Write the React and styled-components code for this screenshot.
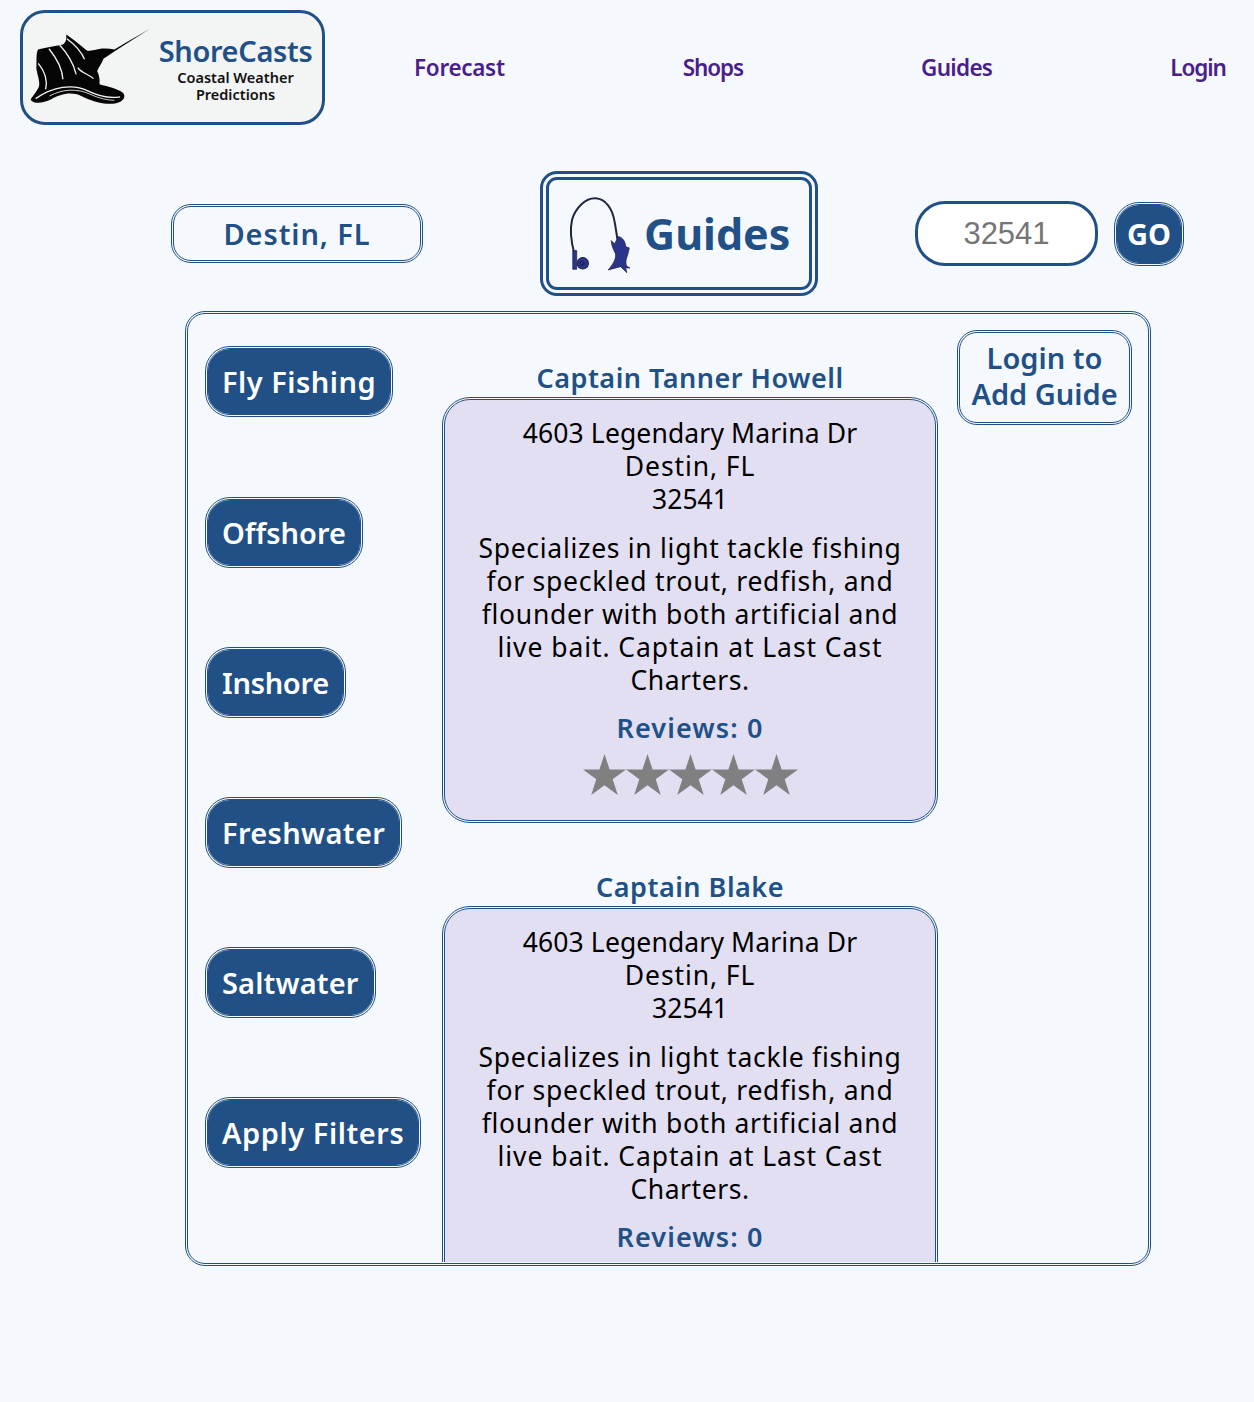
import React from "react";
import styled, { createGlobalStyle } from "styled-components";

const blue = "#215087";
const FONT = `"Noto Sans", "DejaVu Sans", sans-serif`;

const Global = createGlobalStyle`
  html, body { margin: 0; padding: 0; background: #f5f9fd; }
  body { font-family: ${FONT}; }
  * { box-sizing: border-box; }
`;

const Page = styled.div`
  width: 1254px;
  height: 1402px;
  overflow: hidden;
  background: #f5f9fd;
`;

const Header = styled.header`
  display: flex;
  align-items: center;
  padding: 10px 0 0 20px;
  height: 125px;
`;

const LogoBox = styled.div`
  flex: none;
  display: flex;
  width: 305px;
  height: 115px;
  padding: 13px 2px 0 5px;
  border: 3px solid ${blue};
  border-radius: 25px;
  background: #f3f4f4;
`;

const LogoText = styled.div`
  flex: 1;
  display: flex;
  flex-direction: column;
  align-items: center;
  padding-top: 8px;
`;

const Brand = styled.div`
  font-size: 29px;
  line-height: 34px;
  font-weight: 600;
  letter-spacing: -0.35px;
  color: ${blue};
`;

const Tagline = styled.div`
  margin-top: 1px;
  font-size: 14.5px;
  line-height: 17px;
  font-weight: 600;
  color: #111;
  text-align: center;
`;

const Nav = styled.nav`
  display: flex;
  gap: 178px;
  margin-left: 89px;
`;

const NavLink = styled.a`
  font-size: 22.5px;
  font-weight: 600;
  color: #4a1e8c;
  white-space: nowrap;
  letter-spacing: ${(p) => p.$ls}px;
`;

const Toolbar = styled.div`
  display: flex;
  align-items: center;
  height: 125px;
  margin-top: 46px;
  padding-left: 171px;
`;

const Location = styled.div`
  width: 252px;
  height: 59px;
  display: flex;
  align-items: center;
  justify-content: center;
  border: 3px double ${blue};
  border-radius: 20px;
  font-size: 29px;
  font-weight: 600;
  letter-spacing: 0.9px;
  color: ${blue};
`;

const TitleBox = styled.div`
  width: 278px;
  height: 125px;
  margin-left: 117px;
  display: flex;
  align-items: center;
  padding-left: 18px;
  gap: 10px;
  border: 9px double ${blue};
  border-radius: 17px;
`;

const TitleText = styled.h1`
  margin: 0;
  font-size: 43px;
  font-weight: 700;
  color: ${blue};
`;

const ZipInput = styled.input`
  width: 183px;
  height: 65px;
  margin-left: 97px;
  border: 3px solid ${blue};
  border-radius: 30px;
  background: #fff;
  text-align: center;
  font-family: "Liberation Sans", Arial, sans-serif;
  font-size: 31px;
  outline: none;
  &::placeholder { color: #757575; opacity: 1; }
`;

const GoButton = styled.button`
  width: 70px;
  height: 64px;
  margin-left: 16px;
  padding: 0;
  border: 3px double ${blue};
  border-radius: 25px;
  background: ${blue};
  background-clip: padding-box;
  color: #fff;
  font-family: ${FONT};
  font-size: 29px;
  font-weight: 700;
`;

const Panel = styled.main`
  display: flex;
  align-items: flex-start;
  width: 966px;
  height: 955px;
  margin: 15px 0 0 185px;
  padding: 5px 0 0 17px;
  border: 3px double ${blue};
  border-radius: 20px;
  overflow: hidden;
`;

const Filters = styled.aside`
  flex: none;
  width: 237px;
  display: flex;
  flex-direction: column;
  align-items: flex-start;
  gap: 79.2px;
  padding-top: 27.4px;
`;

const FilterButton = styled.button`
  height: 71px;
  padding: 0 14px;
  border: 3px double ${blue};
  border-radius: 25px;
  background: ${blue};
  background-clip: padding-box;
  color: #fff;
  font-family: ${FONT};
  font-size: 29px;
  font-weight: 600;
  white-space: nowrap;
  letter-spacing: ${(p) => p.$ls}px;
`;

const Guides = styled.section`
  flex: none;
  width: 496px;
  height: 943px;
  overflow: hidden;
  padding-top: 42px;
`;

const GuideEntry = styled.article`
  margin-bottom: 47px;
`;

const GuideName = styled.h2`
  margin: 0 0 3px;
  font-size: 27px;
  line-height: 33px;
  font-weight: 600;
  letter-spacing: 0.5px;
  text-align: center;
  color: ${blue};
`;

const GuideCard = styled.div`
  height: 426px;
  padding: 17px 0 0;
  border: 3px double ${blue};
  border-radius: 28px;
  background: #e2dff2;
  background-clip: padding-box;
  text-align: center;
`;

const TextBlock = styled.p`
  margin: 0 0 ${(p) => p.$gap}px;
  font-size: 26.5px;
  line-height: 33px;
  color: #000;
`;

const Line = styled.span`
  display: block;
  white-space: nowrap;
  letter-spacing: ${(p) => p.$ls}px;
`;

const Reviews = styled.div`
  font-size: 27px;
  line-height: 33px;
  font-weight: 600;
  letter-spacing: 1.1px;
  color: ${blue};
`;

const Stars = styled.div`
  display: flex;
  justify-content: center;
  margin-top: 10px;
`;

const AddGuide = styled.button`
  flex: none;
  width: 175px;
  height: 95px;
  margin: 11px 0 0 19px;
  padding: 0 0 3px;
  border: 3px double ${blue};
  border-radius: 20px;
  background: transparent;
  color: ${blue};
  font-family: ${FONT};
  font-size: 29px;
  line-height: 36px;
  font-weight: 600;
`;

const Sailfish = () => (
  <svg width="123" height="80" viewBox="55 80 370 240" style={{ flex: "none" }}>
    <path d="M422 88 L345 132 L315 150 C295 146 270 146 255 152 L235 155 C215 140 190 118 170 105 C172 120 168 130 160 135 C135 140 105 145 85 150 C78 165 82 185 80 205 C82 225 92 245 88 262 C80 280 65 295 63 302 C75 315 100 312 125 300 C150 285 185 275 215 290 C245 305 285 318 320 312 C340 308 350 295 342 282 C330 270 295 262 270 255 C272 240 268 225 263 215 C270 200 278 190 282 178 L318 154 L345 137 Z" fill="#050505" />
    <g fill="none" stroke="#f3f4f4" strokeWidth="4">
      <path d="M118 148 C140 175 158 205 160 240" />
      <path d="M150 137 C172 160 192 195 200 225" />
      <path d="M172 118 C195 135 215 155 225 180" />
      <path d="M86 192 C105 215 115 240 108 270" />
      <path d="M205 205 C215 222 240 225 252 238" />
      <path d="M78 298 C130 262 190 252 235 275 C265 290 300 298 332 293" />
      <path d="M120 290 C160 268 205 268 240 284 C270 298 295 303 315 303" strokeWidth="2.5" />
    </g>
  </svg>
);

const RodIcon = () => (
  <svg width="67" height="82" viewBox="110 80 200 245" style={{ flex: "none" }}>
    <path d="M132 262 C122 225 118 190 125 160 C135 125 165 95 195 96 C225 98 245 125 252 165 C256 185 258 205 262 225" fill="none" stroke="#24263f" strokeWidth="6" />
    <path d="M127 252 L139 252 L139 308 L127 308 Z" fill="#2a3488" stroke="#1c1d3f" strokeWidth="2" />
    <circle cx="157" cy="290" r="17" fill="#2a3488" stroke="#1c1d3f" strokeWidth="3" />
    <circle cx="155" cy="290" r="6" fill="none" stroke="#11142e" strokeWidth="2" />
    <path d="M264 210 C275 212 285 225 285 240 L296 244 L292 262 C288 275 283 285 288 298 L298 304 L285 304 L289 318 L270 300 L233 310 C245 295 257 280 255 262 C250 250 243 240 242 222 L252 232 Z" fill="#2a3488" stroke="#1c1d3f" strokeWidth="2" />
  </svg>
);

const Star = () => (
  <svg width="43" height="42" viewBox="0 0 43 42">
    <polygon points="21.5,0 26.6,15.6 43,15.6 29.7,25.2 34.8,41 21.5,31.2 8.2,41 13.3,25.2 0,15.6 16.4,15.6" fill="#808080" />
  </svg>
);

const address = [
  ["4603 Legendary Marina Dr", 0.12],
  ["Destin, FL", 0.9],
  ["32541", 0],
];
const about = [
  ["Specializes in light tackle fishing", 0.71],
  ["for speckled trout, redfish, and", 0.75],
  ["flounder with both artificial and", 0.7],
  ["live bait. Captain at Last Cast", 0.93],
  ["Charters.", 0.55],
];
const guides = ["Captain Tanner Howell", "Captain Blake"];
const filters = [
  ["Fly Fishing", 0.5],
  ["Offshore", 0],
  ["Inshore", -0.3],
  ["Freshwater", 0.35],
  ["Saltwater", 0.15],
  ["Apply Filters", 0.55],
];
const links = [
  ["Forecast", -0.3],
  ["Shops", -1.1],
  ["Guides", -0.7],
  ["Login", -1.1],
];

export default function App() {
  return (
    <Page>
      <Global />
      <Header>
        <LogoBox>
          <Sailfish />
          <LogoText>
            <Brand>ShoreCasts</Brand>
            <Tagline>Coastal Weather<br />Predictions</Tagline>
          </LogoText>
        </LogoBox>
        <Nav>
          {links.map(([l, ls]) => <NavLink key={l} $ls={ls}>{l}</NavLink>)}
        </Nav>
      </Header>
      <Toolbar>
        <Location>Destin, FL</Location>
        <TitleBox>
          <RodIcon />
          <TitleText>Guides</TitleText>
        </TitleBox>
        <ZipInput placeholder="32541" />
        <GoButton>GO</GoButton>
      </Toolbar>
      <Panel>
        <Filters>
          {filters.map(([f, ls]) => <FilterButton key={f} $ls={ls}>{f}</FilterButton>)}
        </Filters>
        <Guides>
          {guides.map((g) => (
            <GuideEntry key={g}>
              <GuideName>{g}</GuideName>
              <GuideCard>
                <TextBlock $gap={16}>{address.map(([l, ls]) => <Line key={l} $ls={ls}>{l}</Line>)}</TextBlock>
                <TextBlock $gap={14}>{about.map(([l, ls]) => <Line key={l} $ls={ls}>{l}</Line>)}</TextBlock>
                <Reviews>Reviews: 0</Reviews>
                <Stars>{[0, 1, 2, 3, 4].map((i) => <Star key={i} />)}</Stars>
              </GuideCard>
            </GuideEntry>
          ))}
        </Guides>
        <AddGuide>Login to<br />Add Guide</AddGuide>
      </Panel>
    </Page>
  );
}
